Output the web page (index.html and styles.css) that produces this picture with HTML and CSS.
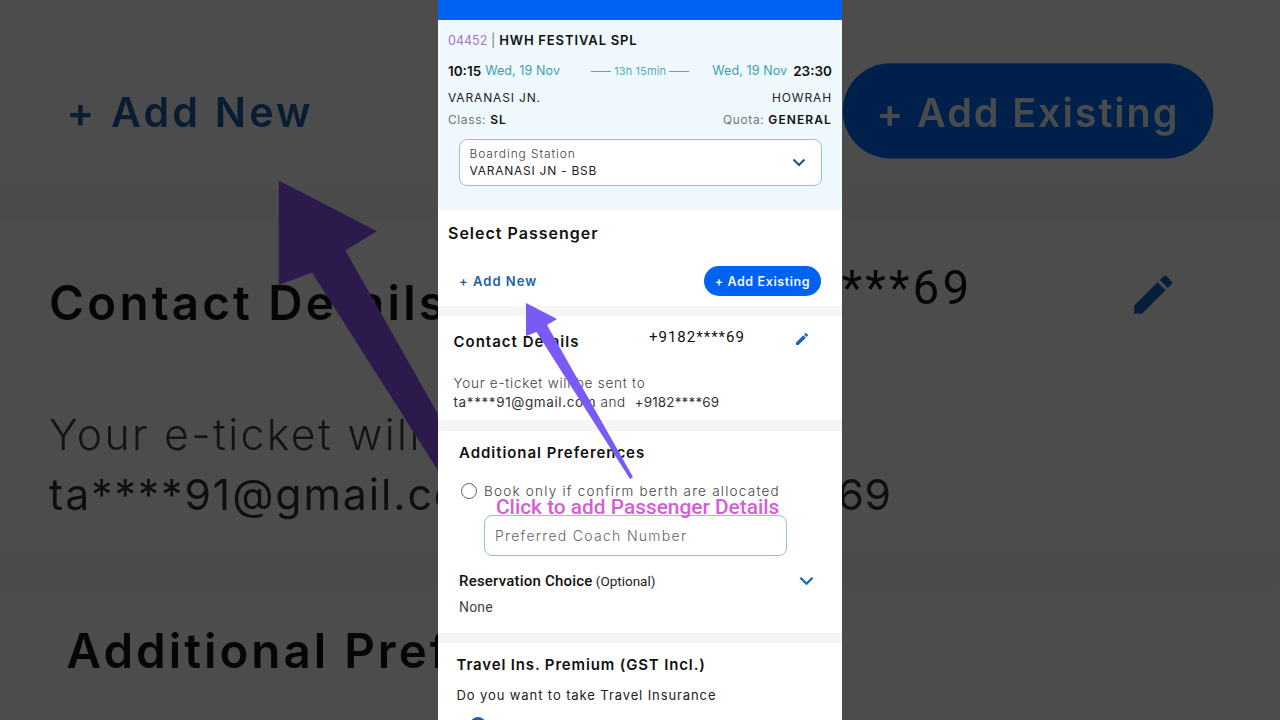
FILE: index.html
```html
<!DOCTYPE html>
<html lang="en">
<head>
<meta charset="utf-8">
<title>Select Passenger</title>
<link rel="stylesheet" href="styles.css">
</head>
<body>
<div class="backdrop">
  <div class="backdrop-inner">
    <section class="card card-passenger-actions">
      <div class="add-row">
        <span class="add-new">+ Add New</span>
        <span class="add-existing">+ Add Existing</span>
      </div>
    </section>
    <div class="gap"></div>
    <section class="card card-contact">
      <div class="contact-row">
        <h2 class="contact-title">Contact Details</h2>
        <span class="contact-phone">+9182****69</span>
        <svg class="pencil" viewBox="0 0 24 24"><path d="M3 17.25V21h3.75L17.81 9.94l-3.75-3.75L3 17.25zM20.71 7.04a1 1 0 0 0 0-1.41l-2.34-2.34a1 1 0 0 0-1.41 0l-1.83 1.83 3.75 3.75 1.83-1.83z"/></svg>
      </div>
      <p class="contact-text"><span class="contact-lead">Your e-ticket will be sent to</span><br>ta****91@gmail.com <span class="contact-and">and</span> &nbsp;<span class="contact-num">+9182****69</span></p>
    </section>
    <div class="gap gap-wide"></div>
    <section class="card card-prefs">
      <h2 class="prefs-title">Additional Preferences</h2>
    </section>
    <svg class="arrow arrow-back" viewBox="0 0 404 720"><polygon points="88,57 119,73 109,79 195,231 192,233 98.500,86 88,90"/></svg>
  </div>
</div>

<main class="phone">
  <div class="topbar"></div>
  <section class="train">
    <div class="train-name"><span class="train-no">04452</span> <span class="train-sep">|</span> HWH FESTIVAL SPL</div>
    <div class="times">
      <span class="time">10:15</span><span class="date date-left">Wed, 19 Nov</span>
      <span class="duration"><i class="dash"></i>13h 15min<i class="dash"></i></span>
      <span class="date date-right">Wed, 19 Nov</span><span class="time">23:30</span>
    </div>
    <div class="split stations"><span>VARANASI JN.</span><span>HOWRAH</span></div>
    <div class="split quota"><span>Class: <b>SL</b></span><span>Quota: <b>GENERAL</b></span></div>
    <div class="boarding">
      <div class="boarding-text">
        <span class="boarding-label">Boarding Station</span>
        <span class="boarding-value">VARANASI JN - BSB</span>
      </div>
      <svg class="chevron" viewBox="0 0 14 9"><path d="M1.500 1.500 7 7l5.500-5.500"/></svg>
    </div>
  </section>

  <section class="card card-passenger">
    <h2 class="select-title">Select Passenger</h2>
    <div class="add-row">
      <span class="add-new">+ Add New</span>
      <span class="add-existing">+ Add Existing</span>
    </div>
  </section>
  <div class="gap"></div>

  <section class="card card-contact">
    <div class="contact-row">
      <h2 class="contact-title">Contact Details</h2>
      <span class="contact-phone">+9182****69</span>
      <svg class="pencil" viewBox="0 0 24 24"><path d="M3 17.25V21h3.75L17.81 9.94l-3.75-3.75L3 17.25zM20.71 7.04a1 1 0 0 0 0-1.41l-2.34-2.34a1 1 0 0 0-1.41 0l-1.83 1.83 3.75 3.75 1.83-1.83z"/></svg>
    </div>
    <p class="contact-text"><span class="contact-lead">Your e-ticket will be sent to</span><br>ta****91@gmail.com <span class="contact-and">and</span> &nbsp;<span class="contact-num">+9182****69</span></p>
  </section>
  <div class="gap gap-wide"></div>

  <section class="card card-prefs">
    <h2 class="prefs-title">Additional Preferences</h2>
    <div class="radio-row"><span class="radio"></span><span>Book only if confirm berth are allocated</span></div>
    <div class="coach">Preferred Coach Number</div>
    <div class="reservation"><span><b>Reservation Choice</b> (Optional)</span>
      <svg class="chevron chevron-wide" viewBox="0 0 14 9"><path d="M1.500 1.500 7 7l5.500-5.500"/></svg>
    </div>
    <div class="none">None</div>
  </section>
  <div class="gap"></div>

  <section class="card card-travel">
    <h2 class="travel-title">Travel Ins. Premium (GST Incl.)</h2>
    <p class="travel-text">Do you want to take Travel Insurance</p>
    <span class="radio-on"></span>
  </section>

  <svg class="arrow" viewBox="0 0 404 720"><polygon points="88,303 119,319 109,325 195,477 192,479 98.500,332 88,336"/></svg>
  <div class="caption">Click to add Passenger Details</div>
</main>
</body>
</html>
```
FILE: styles.css
```css
* { box-sizing: border-box; }
html, body { height: 100%; }
body {
  margin: 0;
  position: relative;
  width: 1280px;
  height: 720px;
  overflow: hidden;
  background: #4d4d4d;
  display: flex;
  justify-content: center;
  font-family: "Inter", "Liberation Sans", sans-serif;
  color: #111;
}
h2, p { margin: 0; font-size: inherit; }

/* Enlarged, darkened copy of the video frame behind the phone column */
.backdrop {
  position: absolute;
  inset: 0;
  overflow: hidden;
  background: #4d4d4d;
}
.backdrop-inner {
  position: relative;
  width: 404px;
  background: #fff;
  transform-origin: 0 0;
  transform: scale(3.168);
  filter: brightness(0.3) blur(0.25px);
}
.card-passenger-actions { padding: 20px 0 10px; }
.backdrop-inner .card-prefs { height: 60px; padding-top: 12px; }
.backdrop-inner .add-existing { background: #006cff; }
.backdrop-inner .arrow { fill: #9258ff; }

.phone {
  position: relative;
  z-index: 1;
  width: 404px;
  height: 720px;
  overflow: hidden;
  background: #fff;
}
.topbar { height: 20px; background: #0062f5; }

.train {
  padding: 11px 10px 24px;
  background: #eff8fc;
  margin-bottom: 1px;
}
.train-name {
  height: 18px;
  font-size: 13px;
  line-height: 18px;
  font-weight: 600;
  letter-spacing: 0.9px;
  word-spacing: -0.4px;
  color: #111;
}
.train-no { font-size: 12.500px; color: #a675c5; font-weight: 400; letter-spacing: 0; }
.train-sep { color: #777; font-weight: 400; letter-spacing: 0; }

.times {
  display: flex;
  align-items: center;
  height: 18px;
  margin-top: 13px;
  line-height: 18px;
}
.time { font-size: 13.500px; font-weight: 600; color: #111; }
.date { font-size: 12.500px; color: #3f9fae; letter-spacing: 0.1px; }
.date-left { margin-left: 4px; }
.date-right { margin-right: 6px; }
.duration {
  flex: 1;
  display: flex;
  align-items: center;
  justify-content: center;
  gap: 3px;
  padding-left: 8px;
  font-size: 11px;
  letter-spacing: 0.1px;
  color: #5aa9b5;
}
.dash { width: 20px; height: 1px; background: #5aa9b5; }

.split { display: flex; justify-content: space-between; }
.stations {
  margin-top: 10px;
  font-size: 12px;
  line-height: 16px;
  letter-spacing: 0.85px;
  color: #222;
}
.quota {
  margin-top: 6px;
  font-size: 12px;
  line-height: 16px;
  letter-spacing: 0.6px;
  color: #777;
}
.quota b { color: #111; font-weight: 600; letter-spacing: 1.1px; }

.boarding {
  display: flex;
  align-items: center;
  justify-content: space-between;
  height: 47px;
  margin: 11px 10.500px 0;
  padding: 0 15px 0 10px;
  background: #fff;
  border: 1px solid #96c4cc;
  border-radius: 8px;
}
.boarding-text { display: flex; flex-direction: column; margin-top: -1px; }
.boarding-label { font-size: 12px; line-height: 17px; font-weight: 300; color: #444; letter-spacing: 0.9px; }
.boarding-value { font-size: 12px; line-height: 17px; color: #222; letter-spacing: 0.75px; }

.chevron {
  width: 14px;
  height: 9px;
  fill: none;
  stroke: #14569e;
  stroke-width: 2;
}
.chevron-wide { width: 17px; height: 10px; stroke: #1565c0; }

.card { background: #fff; }
.gap { height: 10px; background: #f5f5f5; }
.gap-wide { height: 11px; }

.card-passenger { padding: 12px 0 10px; }
.select-title {
  padding-left: 10px;
  font-size: 16px;
  line-height: 20px;
  font-weight: 600;
  letter-spacing: 1px;
  color: #111;
}
.add-row {
  display: flex;
  align-items: center;
  justify-content: space-between;
  height: 30px;
  margin-top: 23px;
  padding: 0 21px;
}
.card-passenger-actions .add-row { margin-top: 0; }
.add-new { font-size: 13px; font-weight: 600; letter-spacing: 1px; color: #1a62a5; }
.add-existing {
  display: flex;
  align-items: center;
  justify-content: center;
  width: 117px;
  height: 30px;
  border-radius: 15px;
  background: #0062f0;
  color: #f2f7ff;
  font-size: 12.500px;
  font-weight: 600;
  letter-spacing: 0.6px;
}

.card-contact { padding: 12px 0 8px 15.500px; }
.contact-row {
  display: flex;
  align-items: flex-start;
  height: 22px;
}
.contact-title {
  width: 195.500px;
  margin-top: 5px;
  font-size: 15px;
  line-height: 18px;
  font-weight: 600;
  letter-spacing: 1px;
  color: #111;
}
.contact-phone {
  font-family: "Roboto", sans-serif;
  font-size: 15px;
  line-height: 18px;
  letter-spacing: 1px;
  color: #111;
}
.pencil {
  width: 16px;
  height: 16px;
  margin: 3px 32.500px 0 auto;
  fill: #1565c0;
}
.contact-text {
  margin-top: 24px;
  font-size: 13.500px;
  line-height: 19px;
  letter-spacing: 0.6px;
  color: #333;
}
.contact-lead { font-weight: 300; letter-spacing: 0.75px; color: #444; }
.contact-and { font-weight: 300; }
.contact-num { letter-spacing: 0.15px; }

.card-prefs { padding: 13px 21px 17px; }
.prefs-title {
  font-size: 15px;
  line-height: 18px;
  font-weight: 600;
  letter-spacing: 0.95px;
  color: #111;
}
.radio-row {
  display: flex;
  align-items: center;
  gap: 7px;
  margin: 20px 0 0 2px;
  font-size: 13.500px;
  line-height: 18px;
  font-weight: 300;
  letter-spacing: 1.23px;
  white-space: nowrap;
  color: #444;
}
.radio {
  flex: none;
  width: 16px;
  height: 16px;
  border: 1.500px solid #666;
  border-radius: 50%;
}
.coach {
  display: flex;
  align-items: center;
  width: 303px;
  height: 41px;
  margin: 15px 0 0 25px;
  padding-left: 10px;
  border: 1px solid #96c4cc;
  border-radius: 8px;
  font-size: 14px;
  font-weight: 300;
  letter-spacing: 1.3px;
  color: #666;
}
.reservation {
  display: flex;
  align-items: center;
  justify-content: space-between;
  height: 18px;
  margin-top: 16px;
  padding-right: 6px;
  font-family: "Roboto", sans-serif;
  font-size: 13.500px;
  line-height: 18px;
  color: #222;
}
.reservation b { font-size: 15px; font-weight: 500; letter-spacing: 0.2px; color: #111; }
.none {
  margin-top: 8px;
  font-family: "Roboto", sans-serif;
  font-size: 14px;
  line-height: 18px;
  letter-spacing: 0.2px;
  color: #444;
}

.card-travel { padding: 13px 18.500px 0; }
.travel-title {
  font-size: 15px;
  line-height: 18px;
  font-weight: 600;
  letter-spacing: 0.85px;
  color: #111;
}
.travel-text {
  margin-top: 13px;
  font-size: 13px;
  line-height: 16px;
  letter-spacing: 0.9px;
  color: #222;
}
.radio-on {
  display: block;
  width: 16px;
  height: 16px;
  margin: 14px 0 0 13.500px;
  border-radius: 50%;
  background: #1c5bc0;
}

/* Video overlays */
.arrow {
  position: absolute;
  top: 0;
  left: 0;
  width: 404px;
  height: 720px;
  fill: #7a5af5;
}
.caption {
  position: absolute;
  top: 494px;
  left: 58px;
  font-family: "Roboto", sans-serif;
  font-size: 20.850px;
  line-height: 26px;
  font-weight: 500;
  white-space: nowrap;
  color: #d85cd8;
}
```
